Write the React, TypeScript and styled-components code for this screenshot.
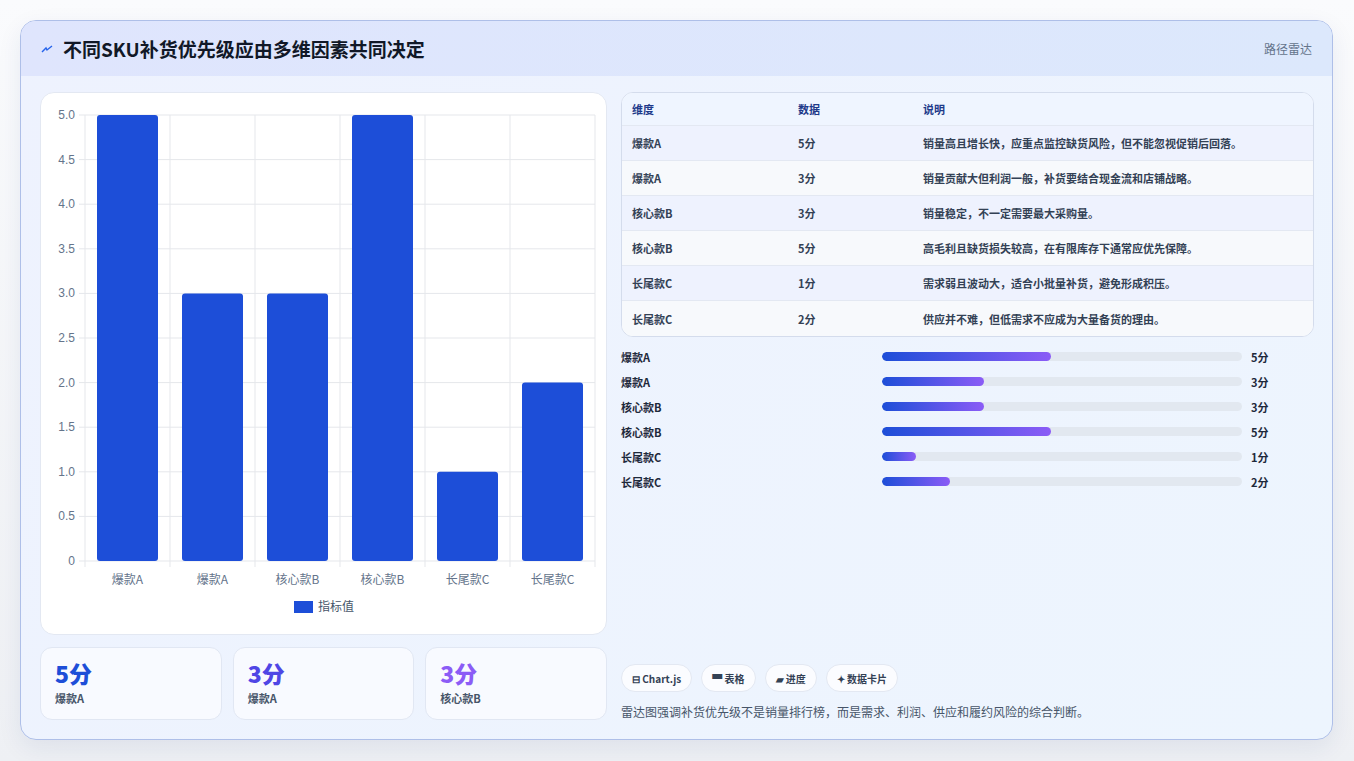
import styled, { createGlobalStyle } from 'styled-components'

const Global = createGlobalStyle`
  html, body { margin: 0; padding: 0; background: #f3f4f6; }
  body { font-family: "Noto Sans CJK SC", "Noto Sans", sans-serif; }
`

const Page = styled.div`
  width: 1354px;
  height: 761px;
  padding: 20px 20px 0 20px;
  box-sizing: border-box;
  background: linear-gradient(#fafbfd, #eef0f4);
`

const Card = styled.div`
  width: 1313px;
  height: 720px;
  box-sizing: border-box;
  border: 1px solid #aebfe8;
  border-radius: 16px;
  background: linear-gradient(135deg, #eef2fe, #edf5fe);
  overflow: hidden;
  display: flex;
  flex-direction: column;
  box-shadow: 0 8px 24px rgba(30, 50, 120, 0.08);
`

const Header = styled.div`
  height: 55px;
  flex: none;
  display: flex;
  align-items: center;
  justify-content: space-between;
  padding: 0 20px;
  background: linear-gradient(90deg, #dfe5fd, #dce8fc);
`

const Title = styled.h1`
  margin: 0;
  font-size: 19px;
  font-weight: 700;
  color: #111827;
  display: flex;
  align-items: center;
  gap: 10px;
`

const Tag = styled.span`
  font-size: 12px;
  color: #64748b;
`

const Body = styled.div`
  flex: 1;
  display: grid;
  grid-template-columns: 567px 693px;
  gap: 14px;
  padding: 16px 19px 19px 19px;
`

const Left = styled.div`
  display: flex;
  flex-direction: column;
  gap: 12px;
`

const Panel = styled.div`
  background: #fff;
  border: 1px solid #e3e8f2;
  border-radius: 14px;
  height: 543px;
  box-sizing: border-box;
`

const Stats = styled.div`
  display: grid;
  grid-template-columns: repeat(3, 1fr);
  gap: 11px;
`

const Stat = styled.div`
  height: 73px;
  box-sizing: border-box;
  background: #f8faff;
  border: 1px solid #e1e7f3;
  border-radius: 12px;
  padding: 11px 14px;
  display: flex;
  flex-direction: column;
  gap: 4px;
`

const StatValue = styled.div<{ $c: string }>`
  font-size: 23px;
  font-weight: 800;
  line-height: 28px;
  color: ${p => p.$c};
`

const StatLabel = styled.div`
  font-size: 11px;
  line-height: 14px;
  font-weight: 600;
  color: #475569;
`

const Right = styled.div`
  display: flex;
  flex-direction: column;
`

const Table = styled.div`
  border: 1px solid #d4dcec;
  border-radius: 12px;
  overflow: hidden;
  background: #fff;
`

const Row = styled.div<{ $bg: string; $h: number }>`
  display: grid;
  grid-template-columns: 166px 125px 1fr;
  align-items: center;
  box-sizing: border-box;
  height: ${p => p.$h}px;
  padding-left: 10px;
  background: ${p => p.$bg};
  border-bottom: 1px solid #e3e8f2;
  font-size: 11px;
  line-height: 14px;
  font-weight: 600;
  color: #334155;
  &:last-child { border-bottom: none; }
`

const HeadCell = styled.span`
  color: #1e3a8a;
`

const Bars = styled.div`
  margin-top: 7px;
  display: flex;
  flex-direction: column;
`

const BarRow = styled.div`
  height: 25px;
  display: grid;
  grid-template-columns: 261px 360px 1fr;
  align-items: center;
  font-size: 11px;
  font-weight: 700;
  color: #1e293b;
`

const Track = styled.div`
  height: 9px;
  border-radius: 5px;
  background: #e2e8f0;
  overflow: hidden;
`

const Fill = styled.div`
  height: 100%;
  border-radius: 5px;
  background: linear-gradient(90deg, #1d4ed8, #8b5cf6);
`

const Value = styled.span`
  padding-left: 9px;
`

const Chips = styled.div`
  margin-top: auto;
  display: flex;
  gap: 9px;
`

const Chip = styled.span`
  height: 28px;
  box-sizing: border-box;
  padding: 0 10px;
  display: inline-flex;
  align-items: center;
  gap: 4px;
  border-radius: 14px;
  background: #fbfcff;
  border: 1px solid #e3e8f2;
  font-size: 10px;
  font-weight: 700;
  color: #334155;
`

const Note = styled.p`
  margin: 12px 0 0 0;
  font-size: 12px;
  line-height: 16px;
  color: #475569;
`

const cats = ['爆款A', '爆款A', '核心款B', '核心款B', '长尾款C', '长尾款C']
const vals = [5, 3, 3, 5, 1, 2]
const notes = [
  '销量高且增长快，应重点监控缺货风险，但不能忽视促销后回落。',
  '销量贡献大但利润一般，补货要结合现金流和店铺战略。',
  '销量稳定，不一定需要最大采购量。',
  '高毛利且缺货损失较高，在有限库存下通常应优先保障。',
  '需求弱且波动大，适合小批量补货，避免形成积压。',
  '供应并不难，但低需求不应成为大量备货的理由。',
]

const Chart = () => {
  const x0 = 44, y0 = 22, w = 510, h = 446
  const colW = w / 6
  return (
    <svg width="565" height="541" style={{ display: 'block' }} fontFamily="Liberation Sans, sans-serif">
      {Array.from({ length: 11 }).map((_, i) => {
        const y = y0 + (h * i) / 10
        return (
          <g key={i}>
            <line x1={x0 - 6} x2={x0 + w} y1={y} y2={y} stroke="#e5e7eb" />
            <text x={x0 - 10} y={y + 4} fontSize="12" fill="#64748b" textAnchor="end">
              {i === 10 ? '0' : (5 - i * 0.5).toFixed(1)}
            </text>
          </g>
        )
      })}
      {Array.from({ length: 7 }).map((_, i) => (
        <line key={i} x1={x0 + colW * i} x2={x0 + colW * i} y1={y0} y2={y0 + h + 6} stroke="#e5e7eb" />
      ))}
      {vals.map((v, i) => {
        const bh = (h * v) / 5
        return (
          <g key={i}>
            <rect x={x0 + colW * i + 12} y={y0 + h - bh} width={61} height={bh} rx={3} fill="#1d4ed8" />
            <text x={x0 + colW * (i + 0.5)} y={y0 + h + 23} fontSize="12" fill="#64748b" textAnchor="middle"
              fontFamily="Noto Sans CJK SC, sans-serif">{cats[i]}</text>
          </g>
        )
      })}
      <rect x={253} y={508} width={19} height={12} fill="#1d4ed8" />
      <text x={277} y={518} fontSize="12" fill="#475569" fontFamily="Noto Sans CJK SC, sans-serif">指标值</text>
    </svg>
  )
}

export default function App() {
  return (
    <Page>
      <Global />
      <Card>
        <Header>
          <Title>
            <svg width="12" height="10" viewBox="0 0 12 10">
              <path d="M1 8 L5 4 L6 6 L11 2" stroke="#2563eb" strokeWidth="1.4" fill="none" />
            </svg>
            不同SKU补货优先级应由多维因素共同决定
          </Title>
          <Tag>路径雷达</Tag>
        </Header>
        <Body>
          <Left>
            <Panel><Chart /></Panel>
            <Stats>
              <Stat><StatValue $c="#1d4ed8">5分</StatValue><StatLabel>爆款A</StatLabel></Stat>
              <Stat><StatValue $c="#4f46e5">3分</StatValue><StatLabel>爆款A</StatLabel></Stat>
              <Stat><StatValue $c="#8b5cf6">3分</StatValue><StatLabel>核心款B</StatLabel></Stat>
            </Stats>
          </Left>
          <Right>
            <Table>
              <Row $bg="#eff5ff" $h={33}>
                <HeadCell>维度</HeadCell><HeadCell>数据</HeadCell><HeadCell>说明</HeadCell>
              </Row>
              {cats.map((c, i) => (
                <Row key={i} $bg={i % 2 === 0 ? '#eef2fe' : '#f7f9fc'} $h={35}>
                  <span>{c}</span><span>{vals[i]}分</span><span>{notes[i]}</span>
                </Row>
              ))}
            </Table>
            <Bars>
              {cats.map((c, i) => (
                <BarRow key={i}>
                  <span>{c}</span>
                  <Track><Fill style={{ width: `${vals[i] * 9.4}%` }} /></Track>
                  <Value>{vals[i]}分</Value>
                </BarRow>
              ))}
            </Bars>
            <Chips>
              <Chip>⊟ Chart.js</Chip>
              <Chip>▀ 表格</Chip>
              <Chip>▰ 进度</Chip>
              <Chip>✦ 数据卡片</Chip>
            </Chips>
            <Note>雷达图强调补货优先级不是销量排行榜，而是需求、利润、供应和履约风险的综合判断。</Note>
          </Right>
        </Body>
      </Card>
    </Page>
  )
}
